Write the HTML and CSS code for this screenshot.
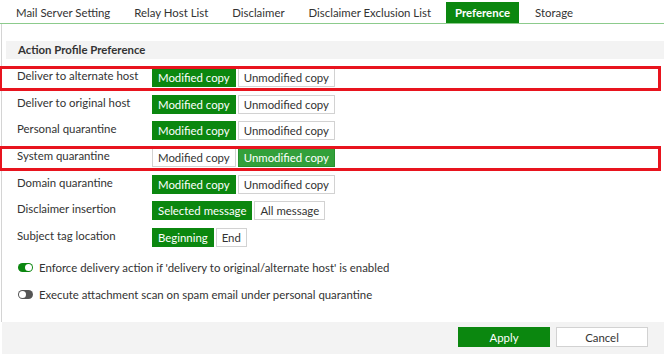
FILE: index.html
```html
<!DOCTYPE html>
<html lang="en">
  <head>
    <meta charset="UTF-8" />
    <title>Preference</title>
    <link rel="stylesheet" href="styles.css">
  </head>
  <body>
    <nav class="tabs">
      <span class="tab">Mail Server Setting</span>
      <span class="tab">Relay Host List</span>
      <span class="tab">Disclaimer</span>
      <span class="tab">Disclaimer Exclusion List</span>
      <span class="tab active">Preference</span>
      <span class="tab">Storage</span>
    </nav>

    <main class="panel">
      <h2 class="section-title">Action Profile Preference</h2>

      <div class="rows">
        <div class="row highlight">
          <span class="label">Deliver to alternate host</span>
          <div class="group">
            <button class="on">Modified copy</button>
            <button>Unmodified copy</button>
          </div>
        </div>
        <div class="row">
          <span class="label">Deliver to original host</span>
          <div class="group">
            <button class="on">Modified copy</button>
            <button>Unmodified copy</button>
          </div>
        </div>
        <div class="row">
          <span class="label">Personal quarantine</span>
          <div class="group">
            <button class="on">Modified copy</button>
            <button>Unmodified copy</button>
          </div>
        </div>
        <div class="row highlight">
          <span class="label">System quarantine</span>
          <div class="group">
            <button>Modified copy</button>
            <button class="on light">Unmodified copy</button>
          </div>
        </div>
        <div class="row">
          <span class="label">Domain quarantine</span>
          <div class="group">
            <button class="on">Modified copy</button>
            <button>Unmodified copy</button>
          </div>
        </div>
        <div class="row">
          <span class="label">Disclaimer insertion</span>
          <div class="group">
            <button class="on">Selected message</button>
            <button>All message</button>
          </div>
        </div>
        <div class="row">
          <span class="label">Subject tag location</span>
          <div class="group">
            <button class="on">Beginning</button>
            <button>End</button>
          </div>
        </div>
      </div>

      <div class="toggles">
        <label class="toggle-row">
          <span class="toggle enabled"></span>
          Enforce delivery action if 'delivery to original/alternate host' is enabled
        </label>
        <label class="toggle-row">
          <span class="toggle"></span>
          Execute attachment scan on spam email under personal quarantine
        </label>
      </div>
    </main>

    <footer class="footer">
      <button class="btn-apply">Apply</button>
      <button class="btn-cancel">Cancel</button>
    </footer>
  </body>
</html>
```

FILE: styles.css
```css
body {
  font-family: Lato, "Liberation Sans", sans-serif;
  font-size: 11.4px;
  color: #333;
  margin: 0;
  background: #fff;
  width: 664px;
  height: 354px;
  overflow: hidden;
}

button {
  font-family: inherit;
  font-size: 11.4px;
  cursor: pointer;
}

.tabs {
  display: flex;
  align-items: flex-end;
  height: 23px;
  padding-left: 4px;
  border-bottom: 1px solid #8ccb8c;
}

.tab {
  padding: 0 12px;
  height: 21px;
  line-height: 21px;
  color: #333;
}

.tab.active {
  background: #0b870f;
  color: #fff;
  font-weight: bold;
  margin-left: 3px;
  padding: 0 9px;
  margin-right: 4px;
}

.panel {
  border-left: 1px solid #d4d4d4;
  margin-left: 1px;
  height: 298px;
  box-sizing: border-box;
  padding-top: 17px;
}

.section-title {
  margin: 0 0 0 4px;
  height: 18px;
  line-height: 18px;
  padding-left: 12px;
  background: #f3f3f3;
  font-size: 11.4px;
  font-weight: bold;
  color: #333;
}

.rows {
  margin-top: 9px;
}

.row {
  position: relative;
  display: flex;
  align-items: flex-start;
  height: 26.67px;
}

.label {
  width: 135px;
  padding-left: 15px;
  line-height: 16px;
}

.highlight::after {
  content: "";
  position: absolute;
  left: -3px;
  top: -2px;
  width: 662px;
  height: 25px;
  border: 3px solid #e8141e;
  box-sizing: border-box;
  pointer-events: none;
}

.group {
  display: flex;
  gap: 2px;
}

.group button {
  height: 19px;
  padding: 0 5px;
  border: 1px solid #d2d2d2;
  background: #fff;
  color: #333;
  line-height: 17px;
}

.group button.on {
  background: #0b870f;
  border-color: #0b870f;
  color: #fff;
}

.group button.on.light {
  background: #33a03a;
  border-color: #25912c;
}

.toggles {
  margin-top: 5px;
  padding-left: 16px;
  display: flex;
  flex-direction: column;
  gap: 11px;
}

.toggle-row {
  display: flex;
  align-items: center;
  gap: 6px;
  height: 16px;
}

.toggle {
  position: relative;
  width: 15px;
  height: 9px;
  border-radius: 5px;
  background: #555;
}

.toggle::after {
  content: "";
  position: absolute;
  left: 1px;
  top: 1px;
  width: 7px;
  height: 7px;
  border-radius: 50%;
  background: #fff;
}

.toggle.enabled {
  background: #0b870f;
}

.toggle.enabled::after {
  left: 7px;
}

.footer {
  display: flex;
  justify-content: flex-end;
  align-items: flex-start;
  gap: 6px;
  margin-left: 2px;
  height: 32px;
  padding: 5px 16px 0 0;
  box-sizing: border-box;
  background: #f3f3f3;
}

.footer button {
  width: 92px;
  height: 20px;
  border: 1px solid #d2d2d2;
  background: #fff;
  color: #333;
}

.footer .btn-apply {
  background: #0b870f;
  border-color: #0b870f;
  color: #fff;
}
```
